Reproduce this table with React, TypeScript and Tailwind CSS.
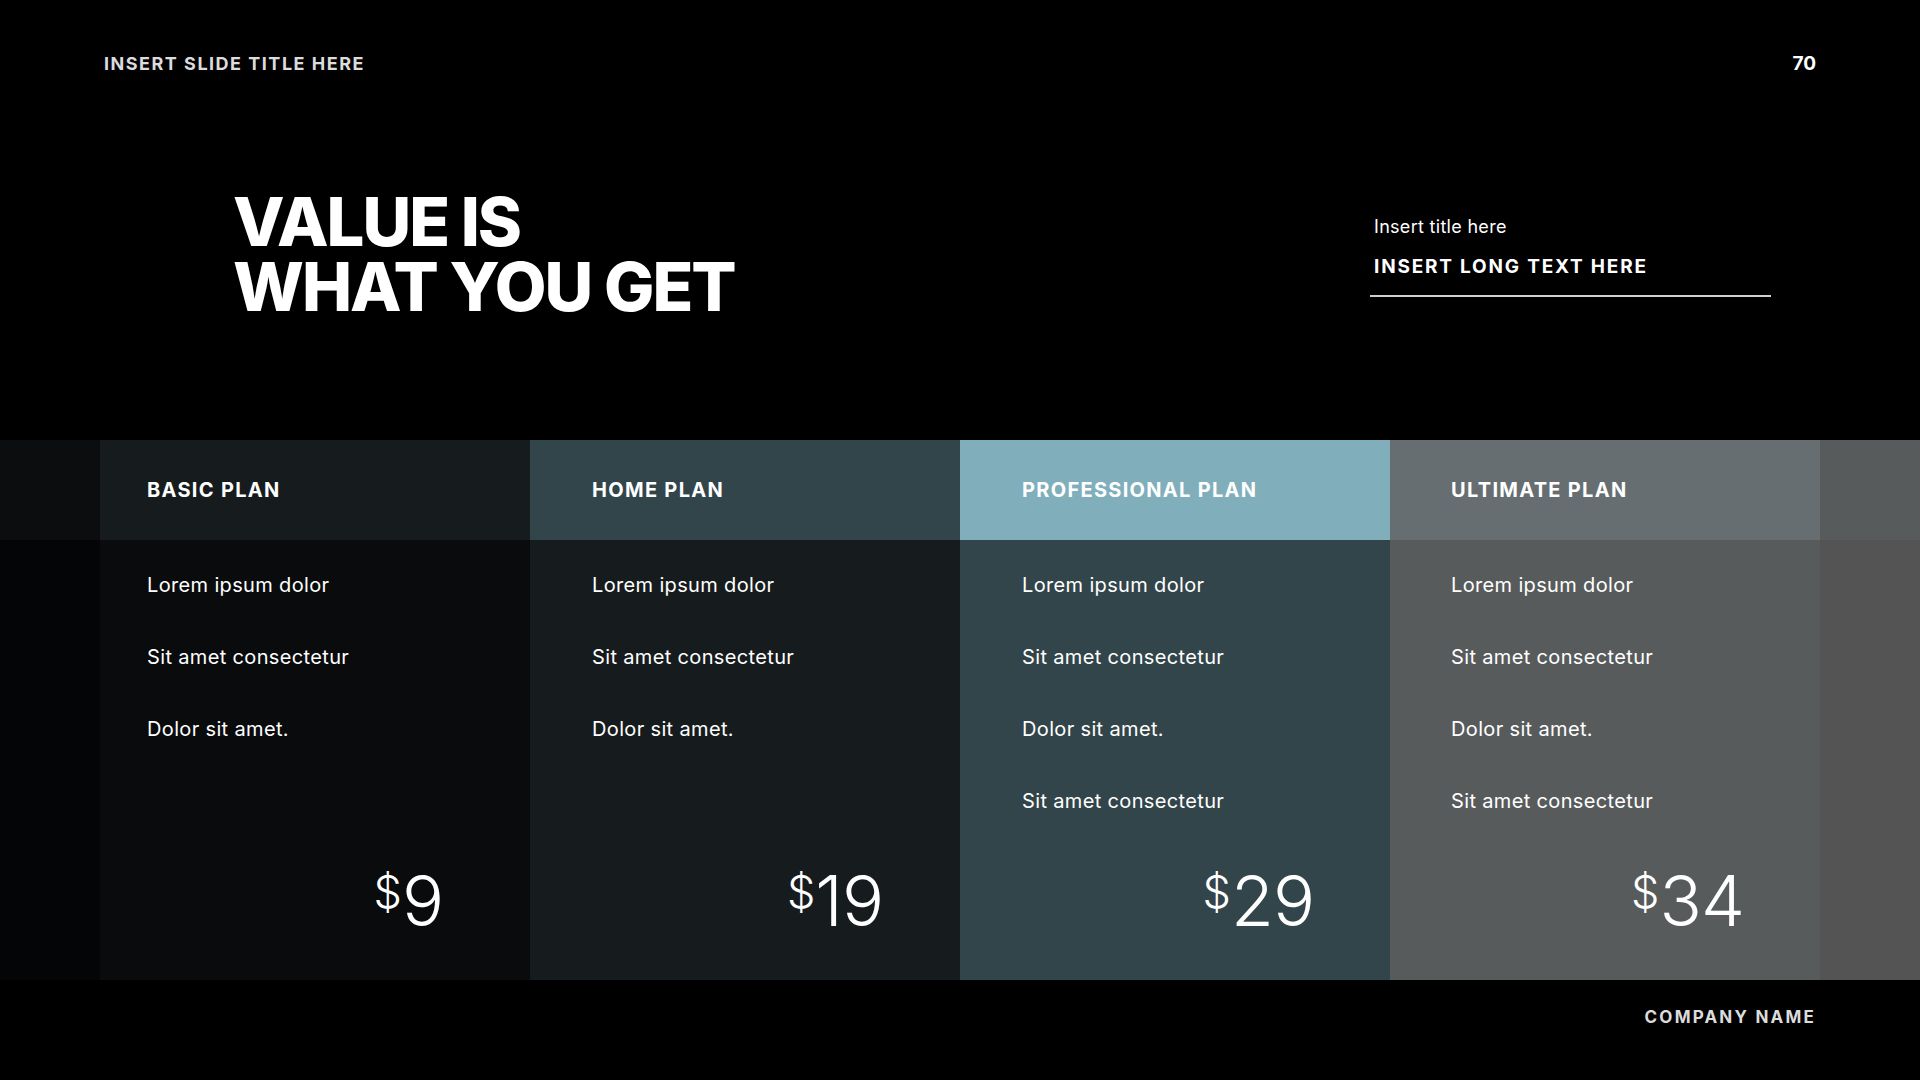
import React from "react";

type Plan = {
  name: string;
  headBg: string;
  bodyBg: string;
  items: string[];
  price: string;
  padL: string;
  padR: string;
};

const plans: Plan[] = [
  {
    name: "BASIC PLAN",
    headBg: "bg-[#161c1e]",
    bodyBg: "bg-[#090b0d]",
    items: ["Lorem ipsum dolor", "Sit amet consectetur", "Dolor sit amet."],
    price: "9",
    padL: "pl-[47px]",
    padR: "pr-[87px]",
  },
  {
    name: "HOME PLAN",
    headBg: "bg-[#32454a]",
    bodyBg: "bg-[#161c1e]",
    items: ["Lorem ipsum dolor", "Sit amet consectetur", "Dolor sit amet."],
    price: "19",
    padL: "pl-[62px]",
    padR: "pr-[77px]",
  },
  {
    name: "PROFESSIONAL PLAN",
    headBg: "bg-[#80afbb]",
    bodyBg: "bg-[#32454a]",
    items: [
      "Lorem ipsum dolor",
      "Sit amet consectetur",
      "Dolor sit amet.",
      "Sit amet consectetur",
    ],
    price: "29",
    padL: "pl-[62px]",
    padR: "pr-[76px]",
  },
  {
    name: "ULTIMATE PLAN",
    headBg: "bg-[#666e71]",
    bodyBg: "bg-[#585b5c]",
    items: [
      "Lorem ipsum dolor",
      "Sit amet consectetur",
      "Dolor sit amet.",
      "Sit amet consectetur",
    ],
    price: "34",
    padL: "pl-[61px]",
    padR: "pr-[76px]",
  },
];

const heading = { fontFamily: "Inter, 'Noto Sans', sans-serif" };
const body = { fontFamily: "Inter, 'Noto Sans', sans-serif" };

function PlanColumn({ p }: { p: Plan }) {
  return (
    <div className="flex w-[430px] flex-col">
      <div className={`flex h-[100px] items-center ${p.headBg} ${p.padL}`}>
        <span
          className="text-[20px] font-bold tracking-[1.3px] text-white"
          style={heading}
        >
          {p.name}
        </span>
      </div>
      <div className={`flex flex-1 flex-col ${p.bodyBg} ${p.padL}`}>
        <div className="flex flex-col gap-[48px] pt-[33px]" style={body}>
          {p.items.map((it, i) => (
            <div
              key={i}
              className="text-[20px] leading-[24px] tracking-[0.35px] text-white"
            >
              {it}
            </div>
          ))}
        </div>
        <div
          className={`mt-auto flex items-start justify-end pb-[44px] text-white ${p.padR}`}
          style={body}
        >
          <span className="mt-[3px] text-[45px] font-light leading-[45px]">
            $
          </span>
          <span className="text-[70px] font-light leading-[70px] tracking-[-1px]">
            {p.price}
          </span>
        </div>
      </div>
    </div>
  );
}

export default function App() {
  return (
    <div className="flex h-[1080px] w-[1920px] flex-col overflow-hidden bg-black">
      <div
        className="flex items-center justify-between px-[104px] pt-[52px]"
        style={heading}
      >
        <span className="text-[18px] font-bold leading-[24px] tracking-[1.5px] text-[#dcdcdc]">
          INSERT SLIDE TITLE HERE
        </span>
        <span className="text-[19px] font-bold leading-[24px] text-white">
          70
        </span>
      </div>

      <div className="flex h-[364px] items-start justify-between pl-[233px] pr-[149px]">
        <div
          className="mt-[113px] flex flex-col text-[67px] font-extrabold leading-[65px] tracking-[-2px] text-white"
          style={heading}
        >
          <div>VALUE IS</div>
          <div>WHAT YOU GET</div>
        </div>
        <div className="mt-[139px] flex w-[401px] flex-col">
          <div
            className="pl-[4px] text-[18px] leading-[24px] tracking-[0.3px] text-white"
            style={body}
          >
            Insert title here
          </div>
          <div
            className="mt-[16px] pl-[4px] text-[19px] font-bold leading-[24px] tracking-[1.8px] text-white"
            style={heading}
          >
            INSERT LONG TEXT HERE
          </div>
          <div className="mt-[16px] h-[2px] w-full bg-[#d0d0d0]" />
        </div>
      </div>

      <div className="flex h-[540px]">
        <div className="flex w-[100px] flex-col">
          <div className="h-[100px] bg-[#0b0d0f]" />
          <div className="flex-1 bg-[#040506]" />
        </div>
        {plans.map((p) => (
          <PlanColumn key={p.name} p={p} />
        ))}
        <div className="flex flex-1 flex-col">
          <div className="h-[100px] bg-[#585b5c]" />
          <div className="flex-1 bg-[#545454]" />
        </div>
      </div>

      <div className="flex flex-1 items-center justify-end px-[104px] pb-[24px]">
        <span
          className="text-[17px] font-bold tracking-[2.2px] text-[#dcdcdc]"
          style={heading}
        >
          COMPANY NAME
        </span>
      </div>
    </div>
  );
}
